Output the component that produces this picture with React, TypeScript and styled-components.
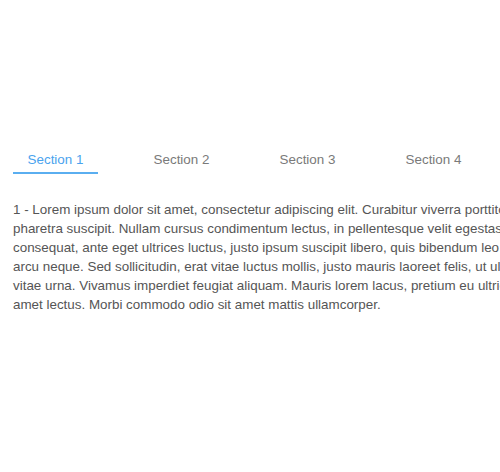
import styled, { createGlobalStyle } from 'styled-components';
import { useState } from 'react';

const Global = createGlobalStyle`
  html, body {
    margin: 0;
    padding: 0;
    background: #fff;
    overflow: hidden;
  }
  body {
    font-family: "Liberation Sans", Arial, sans-serif;
  }
`;

const Page = styled.div`
  width: 500px;
  height: 472px;
  overflow: hidden;
  padding: 146px 0 0 13px;
  box-sizing: border-box;
`;

const TabBar = styled.div`
  display: flex;
  gap: 41px;
`;

const Tab = styled.button<{ $active: boolean }>`
  flex: 0 0 85px;
  height: 28px;
  padding: 0;
  border: 0;
  border-bottom: 2px solid ${({ $active }) => ($active ? '#5aaef0' : 'transparent')};
  background: none;
  font-family: inherit;
  font-size: 13.4px;
  color: ${({ $active }) => ($active ? '#4aa3ee' : '#7a7a7a')};
  cursor: pointer;
  white-space: nowrap;
`;

const Panel = styled.div`
  margin-top: 26px;
  width: 700px;
  font-size: 13.4px;
  line-height: 19px;
  color: #555;
`;

const Line = styled.span`
  display: block;
  white-space: nowrap;
`;

const lines = [
  '1 - Lorem ipsum dolor sit amet, consectetur adipiscing elit. Curabitur viverra porttitor nisl, sed',
  'pharetra suscipit. Nullam cursus condimentum lectus, in pellentesque velit egestas nec. Sed',
  'consequat, ante eget ultrices luctus, justo ipsum suscipit libero, quis bibendum leo metus non',
  'arcu neque. Sed sollicitudin, erat vitae luctus mollis, justo mauris laoreet felis, ut ullamcorper',
  'vitae urna. Vivamus imperdiet feugiat aliquam. Mauris lorem lacus, pretium eu ultricies sit',
  'amet lectus. Morbi commodo odio sit amet mattis ullamcorper.',
];

const tabs = ['Section 1', 'Section 2', 'Section 3', 'Section 4'];

export default function App() {
  const [active, setActive] = useState(0);
  return (
    <>
      <Global />
      <Page>
        <TabBar>
          {tabs.map((t, i) => (
            <Tab key={t} $active={i === active} onClick={() => setActive(i)}>
              {t}
            </Tab>
          ))}
        </TabBar>
        <Panel>
          {lines.map((l) => (
            <Line key={l}>{l.replace(/^1/, String(active + 1))}</Line>
          ))}
        </Panel>
      </Page>
    </>
  );
}
